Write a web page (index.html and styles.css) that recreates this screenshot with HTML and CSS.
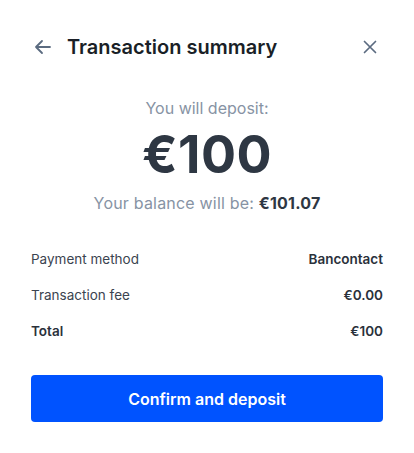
FILE: index.html
```html
<!DOCTYPE html>
<html>
<head>
<meta charset="utf-8">
<link rel="stylesheet" href="styles.css">
</head>
<body>
<div class="sheet">
  <header class="header">
    <button class="icon-btn back" aria-label="Back">
      <svg width="20" height="20" viewBox="0 0 20 20" fill="none" stroke="#5b6b80" stroke-width="1.8" stroke-linecap="round" stroke-linejoin="round"><path d="M17 10H3M9 4l-6 6 6 6"/></svg>
    </button>
    <h1 class="title">Transaction summary</h1>
    <button class="icon-btn close" aria-label="Close">
      <svg width="14" height="14" viewBox="0 0 14 14" fill="none" stroke="#5b6b80" stroke-width="1.7" stroke-linecap="round"><path d="M1.5 1.5l11 11M12.5 1.5l-11 11"/></svg>
    </button>
  </header>
  <section class="summary">
    <p class="label">You will deposit:</p>
    <p class="amount">€100</p>
    <p class="balance">Your balance will be: <strong>€101.07</strong></p>
  </section>
  <dl class="details">
    <div class="row"><dt>Payment method</dt><dd>Bancontact</dd></div>
    <div class="row"><dt>Transaction fee</dt><dd>€0.00</dd></div>
    <div class="row total"><dt>Total</dt><dd>€100</dd></div>
  </dl>
  <button class="confirm">Confirm and deposit</button>
</div>
</body>
</html>
```
FILE: styles.css
```css
* { box-sizing: border-box; }
html, body { margin: 0; padding: 0; background: #fff; }
body { font-family: Inter, "Noto Sans", sans-serif; color: #1f2631; }
.sheet { padding: 28px 31px 0 31px; }
.header { display: flex; align-items: center; height: 38px; }
.icon-btn { background: none; border: 0; padding: 0; display: flex; align-items: center; justify-content: center; cursor: pointer; }
.back { width: 22px; height: 22px; margin-left: 1px; }
.title { flex: 1; margin: 0 0 0 13px; font-size: 20px; font-weight: 600; color: #1a1f27; letter-spacing: 0; }
.close { width: 16px; height: 16px; margin-right: 5px; }
.summary { text-align: center; margin-top: 32px; }
.label { margin: 0; font-size: 16px; line-height: 20px; color: #8793a4; }
.amount { margin: 9px 0 0; font-size: 52px; line-height: 56px; font-weight: 700; color: #2e3743; letter-spacing: 0.5px; }
.balance { margin: 10px 0 0; font-size: 16px; line-height: 20px; color: #8793a4; letter-spacing: 0.2px; }
.balance strong { font-weight: 700; color: #2e3743; }
.details { margin: 28px 0 0; }
.row { display: flex; justify-content: space-between; align-items: center; height: 36px; font-size: 13.5px; }
.row dt { color: #3b4450; }
.row dd { margin: 0; font-weight: 600; color: #2a313b; }
.row.total dt { font-weight: 600; color: #2a313b; }
.confirm { display: block; width: 100%; height: 47px; margin-top: 26px; border: 0; border-radius: 4px; background: #0053ff; color: #fff; font-family: Inter, sans-serif; font-size: 16px; font-weight: 600; }
```
